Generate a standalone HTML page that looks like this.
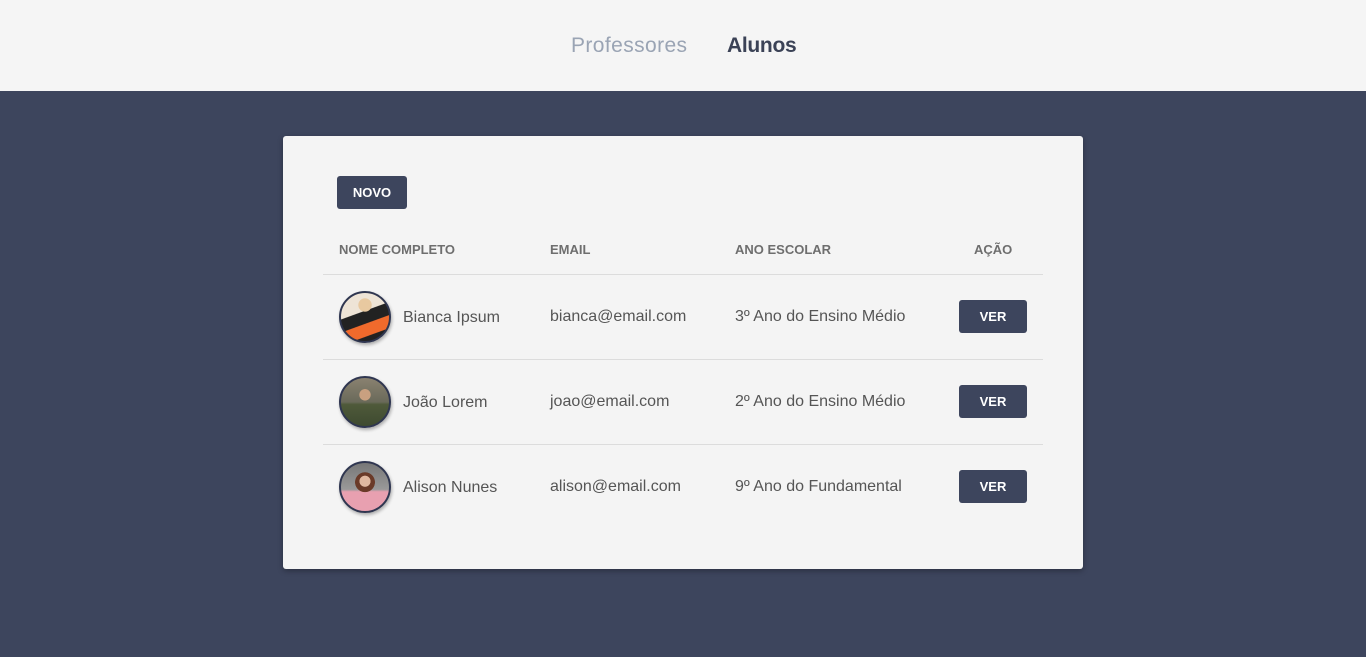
<!DOCTYPE html>
<html><head><meta charset="utf-8"><style>
*{margin:0;padding:0;box-sizing:border-box}
body{width:1366px;height:657px;background:#3d455d;font-family:"Liberation Sans",sans-serif;position:relative;overflow:hidden}
.hdr{position:absolute;left:0;top:0;width:1366px;height:91px;background:#f5f5f5}
.hdr span{position:absolute;top:34px;font-size:21px}
.card{position:absolute;left:283px;top:136px;width:800px;height:433px;background:#f4f4f4;border-radius:3px;box-shadow:0 2px 6px rgba(0,0,0,.3)}
.btn{position:absolute;background:#3d455d;color:#fff;font-weight:bold;font-size:13px;border-radius:3px;text-align:center;line-height:33px;height:33px}
.th{position:absolute;top:106px;font-size:13px;font-weight:bold;color:#6e6e6e}
.line{position:absolute;left:40px;width:720px;height:1px;background:#dcdcdc}
.t{position:absolute;font-size:16px;color:#555}
.av{position:absolute;left:56px;width:52px;height:52px;border-radius:50%;border:2px solid #2f3650;box-shadow:1px 2px 3px rgba(0,0,0,.3)}
</style></head><body>
<div class="hdr"><span style="left:571px;color:#9aa4b4;letter-spacing:0.4px">Professores</span><span style="left:727px;color:#3b4256;font-weight:bold;letter-spacing:-0.3px">Alunos</span></div>
<div class="card">
<div class="btn" style="left:54px;top:40px;width:70px">NOVO</div>
<div class="th" style="left:56px">NOME COMPLETO</div>
<div class="th" style="left:267px">EMAIL</div>
<div class="th" style="left:452px">ANO ESCOLAR</div>
<div class="th" style="left:691px">AÇÃO</div>
<div class="line" style="top:138px"></div>
<div class="line" style="top:223px"></div>
<div class="line" style="top:308px"></div>

<div class="av" style="top:155px;background:radial-gradient(circle at 50% 25%,#e8c9a0 0 15%,transparent 16%),linear-gradient(160deg,#eee4d6 40%,#222 41%,#222 60%,#f06a2c 61%,#f06a2c 80%,#222 81%)"></div>
<div class="t" style="left:120px;top:173px">Bianca Ipsum</div>
<div class="t" style="left:267px;top:172px">bianca@email.com</div>
<div class="t" style="left:452px;top:172px">3º Ano do Ensino Médio</div>
<div class="btn" style="left:676px;top:164px;width:68px">VER</div>

<div class="av" style="top:240px;background:radial-gradient(circle at 50% 35%,#c9a080 0 14%,transparent 15%),linear-gradient(180deg,#8a8270 0,#6a6a5a 50%,#4f5a3a 55%,#3e4a30)"></div>
<div class="t" style="left:120px;top:258px">João Lorem</div>
<div class="t" style="left:267px;top:257px">joao@email.com</div>
<div class="t" style="left:452px;top:257px">2º Ano do Ensino Médio</div>
<div class="btn" style="left:676px;top:249px;width:68px">VER</div>

<div class="av" style="top:325px;background:radial-gradient(circle at 50% 38%,#e0b8a0 0 14%,transparent 15%),radial-gradient(circle at 50% 40%,#6a3a28 0 26%,transparent 27%),linear-gradient(180deg,#777 0,#999 55%,#e8a0b0 60%,#e8a0b0)"></div>
<div class="t" style="left:120px;top:343px">Alison Nunes</div>
<div class="t" style="left:267px;top:342px">alison@email.com</div>
<div class="t" style="left:452px;top:342px">9º Ano do Fundamental</div>
<div class="btn" style="left:676px;top:334px;width:68px">VER</div>
</div>
</body></html>
